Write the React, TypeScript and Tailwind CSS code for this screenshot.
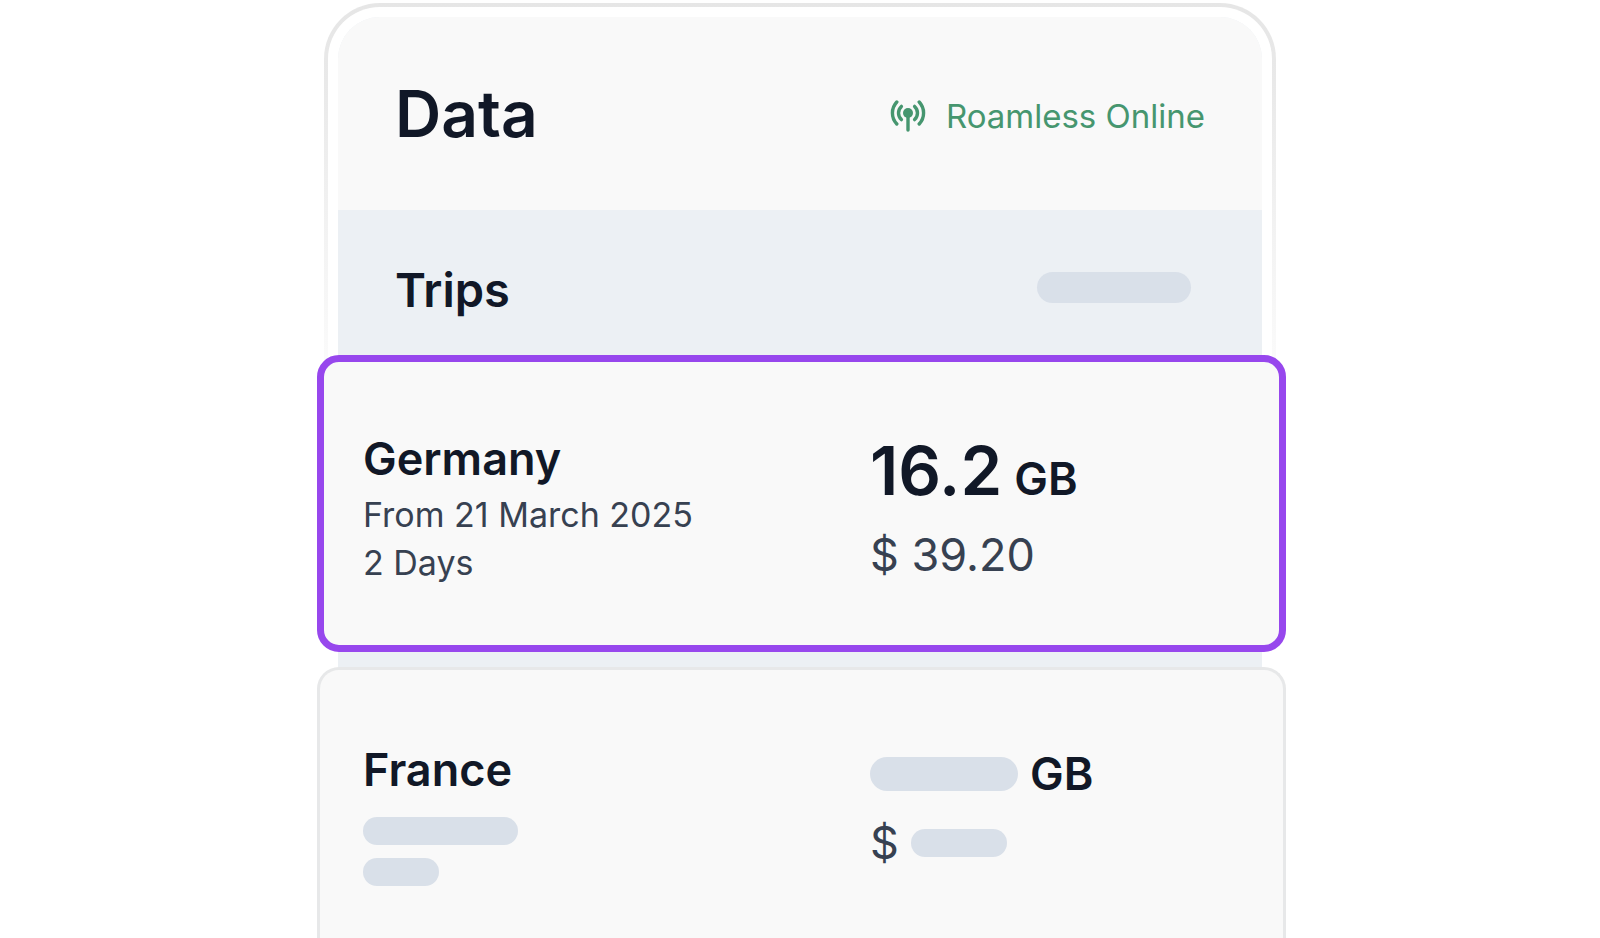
import type { ReactNode } from "react";

function AntennaIcon() {
  return (
    <svg
      className="h-8 w-9 shrink-0"
      viewBox="0 0 36 32"
      fill="none"
      stroke="currentColor"
      strokeWidth="3.4"
      strokeLinecap="round"
      aria-hidden="true"
    >
      <circle cx="18" cy="13" r="5" fill="currentColor" stroke="none" />
      <path d="M18 13v17" />
      <path d="M11.4 6.4a9 9 0 0 0 0 13.2M24.6 6.4a9 9 0 0 1 0 13.2" />
      <path d="M6.8 2a16 16 0 0 0 0 22M29.2 2a16 16 0 0 1 0 22" />
    </svg>
  );
}

function Placeholder({ className }: { className: string }) {
  return <span className={`block shrink-0 rounded-full bg-[#d9e0e9] ${className}`} />;
}

function Trip({ className, place, usage }: { className: string; place: ReactNode; usage: ReactNode }) {
  return (
    <article className={`-ml-[21px] -mr-6 grid grid-cols-[507fr_409fr] bg-[#f9f9f9] ${className}`}>
      <div>{place}</div>
      <div>{usage}</div>
    </article>
  );
}

export default function App() {
  return (
    <main className="flex h-screen flex-col overflow-hidden bg-white px-8 pt-[3px] font-['Inter',sans-serif] text-[#111827]">
      <div className="mx-auto flex w-full max-w-[952px] flex-1 flex-col rounded-t-[56px] bg-[linear-gradient(to_bottom,#e6e6e6_0,#e9e9e9_80px,#f2f2f2_220px,#fafafa_350px,#ffffff_400px)] px-1 pt-1">
        <div className="flex flex-1 flex-col rounded-t-[52px] bg-white px-[10px] pt-[10px]">
          <div className="flex flex-1 flex-col rounded-t-[42px] bg-[#ecf0f4]">
            <header className="flex h-[193px] items-center justify-between rounded-t-[42px] bg-[#f9f9f9] px-[57px]">
              <h1 className="text-[64px] leading-[78px] font-semibold">Data</h1>
              <p className="flex items-center gap-5 pt-1 text-[33px] leading-10 text-[#46966f]">
                <AntennaIcon />
                Roamless Online
              </p>
            </header>

            <section className="flex flex-1 flex-col">
              <div className="flex h-[145px] items-center justify-between pt-[10px] pr-[71px] pl-[57px]">
                <h2 className="pt-1 text-[47px] leading-[58px] font-semibold">Trips</h2>
                <Placeholder className="h-[31px] w-[154px]" />
              </div>

              <Trip
                className="h-[297px] rounded-[22px] border-[7px] border-[#9747ed] pt-[69px] pl-[39px]"
                place={
                  <>
                    <h3 className="mb-1 text-[45px] leading-[56px] font-semibold">Germany</h3>
                    <p className="text-[34px] leading-[48px] text-[#374151]">From 21 March 2025</p>
                    <p className="text-[34px] leading-[48px] text-[#374151]">2 Days</p>
                  </>
                }
                usage={
                  <>
                    <p className="mb-2 flex items-baseline gap-3 text-[67px] leading-20 font-semibold">
                      16.2 <span className="text-[45px]">GB</span>
                    </p>
                    <p className="text-[45px] leading-[56px] text-[#374151]">$ 39.20</p>
                  </>
                }
              />

              <Trip
                className="mt-[15px] flex-1 rounded-t-[22px] border-[3px] border-b-0 border-[#e7e8e9] pt-[72px] pr-1 pl-[43px]"
                place={
                  <>
                    <h3 className="text-[45px] leading-[56px] font-semibold">France</h3>
                    <Placeholder className="mt-[19px] h-7 w-[155px]" />
                    <Placeholder className="mt-[13px] h-7 w-[76px]" />
                  </>
                }
                usage={
                  <>
                    <p className="flex items-center gap-3 text-[45px] leading-[64px] font-semibold">
                      <Placeholder className="h-[34px] w-[148px]" />
                      GB
                    </p>
                    <p className="mt-[5px] flex items-center gap-3 text-[45px] leading-[64px] text-[#374151]">
                      $
                      <Placeholder className="h-7 w-24" />
                    </p>
                  </>
                }
              />
            </section>
          </div>
        </div>
      </div>
    </main>
  );
}
